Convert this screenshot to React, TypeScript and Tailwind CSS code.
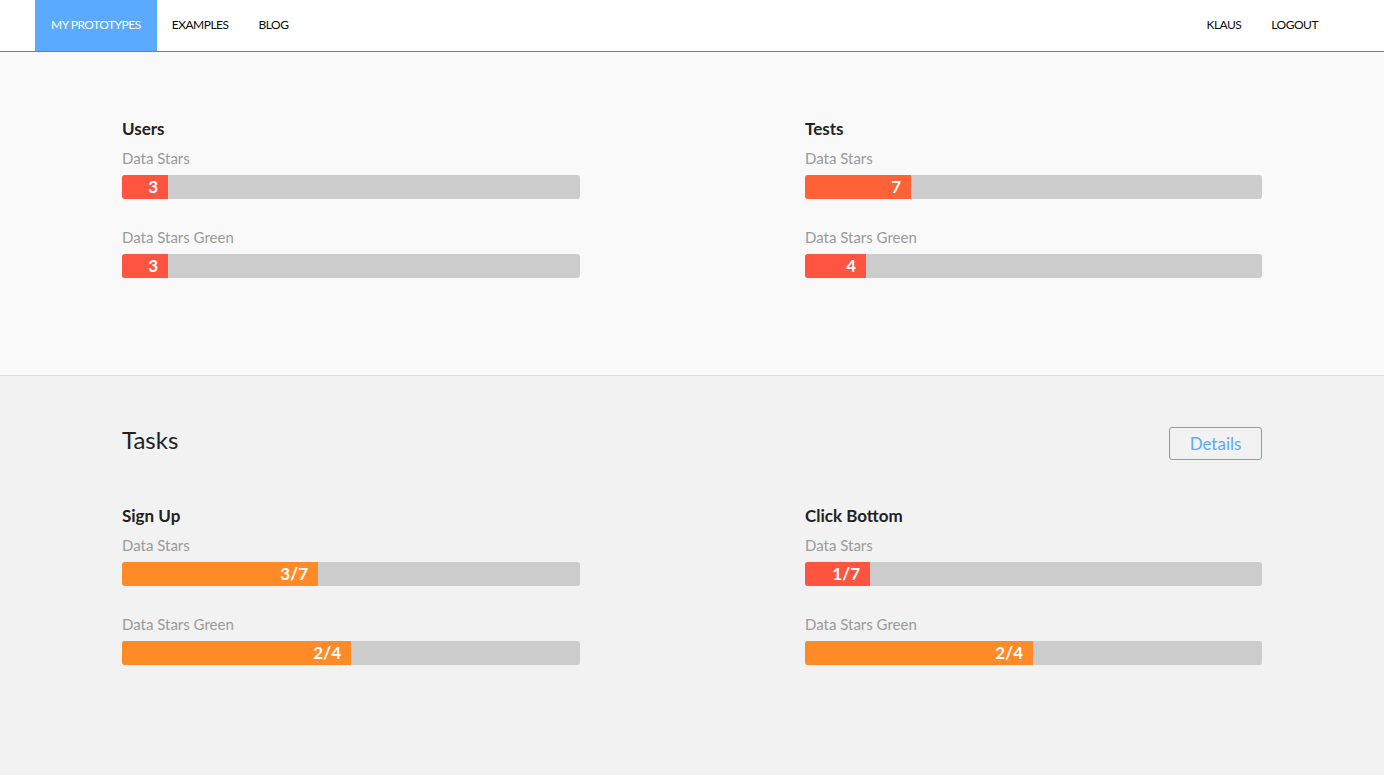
import React from "react";

type BarProps = { label: string; value: string; width: number; color: string };

function Bar({ label, value, width, color }: BarProps) {
  return (
    <div>
      <div className="text-[15px] leading-5 text-[#9a9a9a] h-5">{label}</div>
      <div className="mt-[7px] h-6 w-full rounded-[3px] bg-[#cccccc] overflow-hidden flex">
        <div
          className="h-full flex items-center justify-end pr-[10px] text-white font-bold text-[17px]"
          style={{ width, backgroundColor: color }}
        >
          {value}
        </div>
      </div>
    </div>
  );
}

type Block = { title: string; bars: BarProps[]; w: string };

function StatBlock({ title, bars, w }: Block) {
  return (
    <div className={w}>
      <div className="text-[17px] leading-5 font-bold text-[#222222]">{title}</div>
      <div className="mt-[9px]">
        <Bar {...bars[0]} />
      </div>
      <div className="mt-[28px]">
        <Bar {...bars[1]} />
      </div>
    </div>
  );
}

const RED = "#ff5540";
const RED2 = "#ff6236";
const ORANGE = "#ff8b28";

export default function App() {
  return (
    <div
      className="min-h-[775px] flex flex-col bg-[#f2f2f2]"
      style={{ fontFamily: '"Source Sans Pro", Lato, "Open Sans", sans-serif' }}
    >
      <nav className="h-[52px] bg-white border-b border-[#7a7f86] flex justify-between pl-[35px] pr-[51px] text-[12px] tracking-[-0.5px] text-[#0a0a0a]">
        <div className="flex">
          <a className="px-[16px] pb-[2px] flex items-center bg-[#5aaaff] text-white">MY PROTOTYPES</a>
          <a className="px-[15px] pb-[2px] flex items-center">EXAMPLES</a>
          <a className="px-[15px] pb-[2px] flex items-center">BLOG</a>
        </div>
        <div className="flex">
          <a className="px-[15px] pb-[2px] flex items-center">KLAUS</a>
          <a className="px-[15px] pb-[2px] flex items-center">LOGOUT</a>
        </div>
      </nav>

      <section className="bg-[#f9f9f9] border-b border-[#dddddd] h-[324px] pt-[67px]">
        <div className="w-[1140px] ml-[122px] flex justify-between">
          <StatBlock
            w="w-[458px]"
            title="Users"
            bars={[
              { label: "Data Stars", value: "3", width: 46, color: RED },
              { label: "Data Stars Green", value: "3", width: 46, color: RED },
            ]}
          />
          <StatBlock
            w="w-[457px]"
            title="Tests"
            bars={[
              { label: "Data Stars", value: "7", width: 106, color: RED2 },
              { label: "Data Stars Green", value: "4", width: 61, color: RED },
            ]}
          />
        </div>
      </section>

      <section className="flex-1 bg-[#f2f2f2] pt-[51px]">
        <div className="w-[1140px] ml-[122px]">
          <div className="flex justify-between items-start">
            <h2 className="text-[24px] leading-[26px] text-[#222222]">Tasks</h2>
            <div
              role="button"
              className="w-[93px] h-[33px] flex items-center justify-center rounded-[3px] border border-[#5aa8fa] text-[#5aaaff] text-[17px]"
            >
              Details
            </div>
          </div>
          <div className="mt-[46px] flex justify-between">
            <StatBlock
              w="w-[458px]"
              title="Sign Up"
              bars={[
                { label: "Data Stars", value: "3/7", width: 196, color: ORANGE },
                { label: "Data Stars Green", value: "2/4", width: 229, color: ORANGE },
              ]}
            />
            <StatBlock
              w="w-[457px]"
              title="Click Bottom"
              bars={[
                { label: "Data Stars", value: "1/7", width: 65, color: RED },
                { label: "Data Stars Green", value: "2/4", width: 228, color: ORANGE },
              ]}
            />
          </div>
        </div>
      </section>
    </div>
  );
}
